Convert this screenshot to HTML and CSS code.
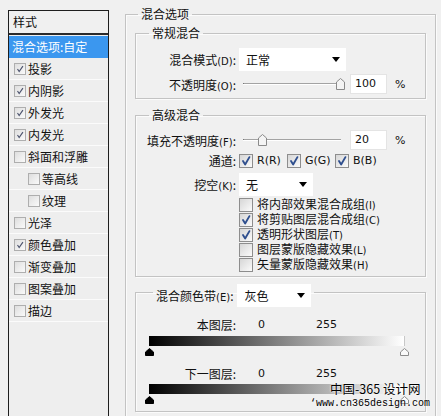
FILE: index.html
```html
<!DOCTYPE html>
<html lang="zh-CN">
<head>
<meta charset="utf-8">
<title>图层样式</title>
<link rel="stylesheet" href="styles.css">
</head>
<body>
<aside class="styles-list">
  <div class="list-head">样式</div>
  <div class="list-item selected">混合选项:自定</div>
  <div class="list-item"><span class="lcb"><svg viewBox="0 0 12 12"><path d="M3 6 L5 9 L9.5 2.5"/></svg></span>投影</div>
  <div class="list-item"><span class="lcb"><svg viewBox="0 0 12 12"><path d="M3 6 L5 9 L9.5 2.5"/></svg></span>内阴影</div>
  <div class="list-item"><span class="lcb"><svg viewBox="0 0 12 12"><path d="M3 6 L5 9 L9.5 2.5"/></svg></span>外发光</div>
  <div class="list-item"><span class="lcb"><svg viewBox="0 0 12 12"><path d="M3 6 L5 9 L9.5 2.5"/></svg></span>内发光</div>
  <div class="list-item"><span class="lcb"></span>斜面和浮雕</div>
  <div class="list-item sub"><span class="lcb"></span>等高线</div>
  <div class="list-item sub"><span class="lcb"></span>纹理</div>
  <div class="list-item"><span class="lcb"></span>光泽</div>
  <div class="list-item"><span class="lcb"><svg viewBox="0 0 12 12"><path d="M3 6 L5 9 L9.5 2.5"/></svg></span>颜色叠加</div>
  <div class="list-item"><span class="lcb"></span>渐变叠加</div>
  <div class="list-item"><span class="lcb"></span>图案叠加</div>
  <div class="list-item"><span class="lcb"></span>描边</div>
</aside>

<main class="panel">
  <fieldset class="group outer">
    <legend>混合选项</legend>

    <fieldset class="group sub-group">
      <legend>常规混合</legend>
      <div class="row row-select first">
        <span class="lbl">混合模式<small>(D)</small>:</span>
        <div class="select wide"><span>正常</span><i class="arrow"></i></div>
      </div>
      <div class="row row-slider">
        <span class="lbl">不透明度<small>(O)</small>:</span>
        <div class="ctl">
          <div class="slider">
            <div class="track"></div>
            <svg class="thumb" style="left:97px" viewBox="0 0 9 12"><path d="M0.5 4 L4.5 0.5 L8.5 4 V11.5 H0.5 Z"/></svg>
          </div>
          <div class="num">100</div>
          <span class="pct">%</span>
        </div>
      </div>
    </fieldset>

    <fieldset class="group sub-group adv">
      <legend>高级混合</legend>
      <div class="row row-slider first">
        <span class="lbl">填充不透明度<small>(F)</small>:</span>
        <div class="ctl">
          <div class="slider">
            <div class="track"></div>
            <svg class="thumb" style="left:19px" viewBox="0 0 9 12"><path d="M0.5 4 L4.5 0.5 L8.5 4 V11.5 H0.5 Z"/></svg>
          </div>
          <div class="num">20</div>
          <span class="pct">%</span>
        </div>
      </div>
      <div class="row row-chan">
        <span class="lbl">通道:</span>
        <div class="ctl">
          <span class="cbi"><span class="cb"><svg viewBox="0 0 14 14"><path d="M3.5 7 L6 11 L11 2.5"/></svg></span><span class="latin">R(R)</span></span>
          <span class="cbi"><span class="cb"><svg viewBox="0 0 14 14"><path d="M3.5 7 L6 11 L11 2.5"/></svg></span><span class="latin">G(G)</span></span>
          <span class="cbi"><span class="cb"><svg viewBox="0 0 14 14"><path d="M3.5 7 L6 11 L11 2.5"/></svg></span><span class="latin">B(B)</span></span>
        </div>
      </div>
      <div class="row row-knock">
        <span class="lbl">挖空<small>(K)</small>:</span>
        <div class="select narrow"><span>无</span><i class="arrow"></i></div>
      </div>
      <div class="checks">
        <div class="check-item"><span class="cb"></span><span class="ct">将内部效果混合成组<small>(I)</small></span></div>
        <div class="check-item"><span class="cb"><svg viewBox="0 0 14 14"><path d="M3.5 7 L6 11 L11 2.5"/></svg></span><span class="ct">将剪贴图层混合成组<small>(C)</small></span></div>
        <div class="check-item"><span class="cb"><svg viewBox="0 0 14 14"><path d="M3.5 7 L6 11 L11 2.5"/></svg></span><span class="ct">透明形状图层<small>(T)</small></span></div>
        <div class="check-item"><span class="cb"></span><span class="ct">图层蒙版隐藏效果<small>(L)</small></span></div>
        <div class="check-item"><span class="cb"></span><span class="ct">矢量蒙版隐藏效果<small>(H)</small></span></div>
      </div>
    </fieldset>

    <fieldset class="group sub-group band">
      <legend class="band-legend">
        <span class="band-lbl">混合颜色带<small>(E)</small>:</span>
        <span class="select narrow"><span>灰色</span><i class="arrow"></i></span>
      </legend>
      <div class="row row-band">
        <span class="lbl">本图层:</span>
        <div class="vals"><span class="v0">0</span><span>255</span></div>
      </div>
      <div class="bar"></div>
      <div class="marks">
        <svg class="mk" viewBox="0 0 9 8"><path class="blk" d="M0.5 7.5 V4 L4.5 0.5 L8.5 4 V7.5 Z"/></svg>
        <svg class="mk" viewBox="0 0 9 8"><path class="wht" d="M0.5 7.5 V4 L4.5 0.5 L8.5 4 V7.5 Z"/></svg>
      </div>
      <div class="row row-band second">
        <span class="lbl">下一图层:</span>
        <div class="vals"><span class="v0">0</span><span>255</span></div>
      </div>
      <div class="bar second-bar"></div>
      <div class="marks">
        <svg class="mk" viewBox="0 0 9 8"><path class="blk" d="M0.5 7.5 V4 L4.5 0.5 L8.5 4 V7.5 Z"/></svg>
        <svg class="mk" viewBox="0 0 9 8"><path class="wht" d="M0.5 7.5 V4 L4.5 0.5 L8.5 4 V7.5 Z"/></svg>
      </div>
    </fieldset>
  </fieldset>
</main>

<div class="watermark">
  <div class="wm-cn">中国-365 设计网</div>
  <div class="wm-url">‘www.cn365design.com</div>
</div>
</body>
</html>
```

FILE: styles.css
```css
html, body {
  margin: 0;
  padding: 0;
}

body {
  width: 441px;
  height: 416px;
  overflow: hidden;
  background: #f0f0f0;
  font-family: "Noto Sans CJK SC", "Liberation Sans", sans-serif;
  font-size: 12px;
  color: #111;
  display: flex;
  align-items: flex-start;
  position: relative;
}

/* ---------- left style list ---------- */
.styles-list {
  flex: none;
  width: 99px;
  height: 420px;
  margin: 10px 0 0 8px;
  border: 1px solid #1e1e1e;
  border-bottom: 0;
  background: #eeeeee;
}

.list-head {
  height: 22px;
  line-height: 22px;
  padding-left: 4px;
  border-bottom: 2px solid #2a2a2a;
  background: #f0f0f0;
}

.list-item {
  height: 21px;
  line-height: 21px;
  border-bottom: 1px solid #fbfbfb;
  display: flex;
  align-items: center;
  gap: 2px;
  padding-left: 5px;
  white-space: nowrap;
}

.list-item.selected {
  height: 22px;
  line-height: 22px;
  margin-top: 1px;
  border-bottom: 0;
  padding-left: 3px;
  background: #3b97ef;
  color: #fff;
}

.list-item.sub {
  padding-left: 19px;
}

.lcb {
  flex: none;
  width: 12px;
  height: 12px;
  box-sizing: border-box;
  border: 1px solid #aeaeae;
  background: linear-gradient(135deg, #dedede, #fafafa);
  display: flex;
}

.lcb svg {
  width: 10px;
  height: 10px;
}

.lcb path {
  fill: none;
  stroke: #4d546e;
  stroke-width: 1.4;
}

/* ---------- right panel ---------- */
.panel {
  flex: none;
  width: 311px;
  margin: 6px 0 0 16px;
}

fieldset.group {
  margin: 0;
  min-width: 0;
  border: 1px solid #c3c3c3;
  box-shadow: 1px 1px 0 #fbfbfb, inset 1px 1px 0 #fbfbfb;
}

fieldset.group > legend {
  padding: 0 3px;
  height: 16px;
  line-height: 16px;
}

.outer {
  padding: 3px 9px 0;
  height: 440px;
  box-sizing: border-box;
}

.outer > legend {
  margin-left: 3px;
}

.sub-group {
  padding: 0 0 4px;
}

.sub-group > legend {
  margin-left: 13px;
}

.adv {
  margin-top: 8px !important;
}

.band {
  margin-top: 7px !important;
  padding-bottom: 7px;
}

.row {
  display: grid;
  grid-template-columns: 100px auto;
  column-gap: 3px;
  align-items: center;
}

.lbl {
  text-align: right;
  white-space: nowrap;
}

.row-select {
  height: 23px;
}

.row-select.first {
  margin-top: 7px;
}

.row-slider {
  height: 20px;
  margin-top: 3px;
}

.row-slider.first {
  margin-top: 7px;
}

.ctl {
  display: flex;
  align-items: center;
}

.select {
  height: 23px;
  box-sizing: border-box;
  background: #fff;
  display: flex;
  align-items: center;
  justify-content: space-between;
  padding: 0 6px 0 7px;
}

.select.wide {
  width: 107px;
}

.select.narrow {
  width: 74px;
}

.arrow {
  width: 0;
  height: 0;
  border-left: 4px solid transparent;
  border-right: 4px solid transparent;
  border-top: 5px solid #000;
}

.slider {
  position: relative;
  width: 107px;
  height: 20px;
}

.track {
  margin: 9px 5px 0 4px;
  height: 1px;
  background: #a3a3a3;
  box-shadow: 0 1px 0 #fff;
  border-left: 1px solid #777;
}

.thumb {
  position: absolute;
  top: 4px;
  width: 9px;
  height: 12px;
}

.thumb path {
  fill: #f4f4f4;
  stroke: #8a8a8a;
  stroke-width: 1;
}

.num {
  width: 37px;
  height: 20px;
  margin-left: 4px;
  box-sizing: border-box;
  background: #fff;
  border: 1px solid #e4e4e4;
  padding-left: 4px;
  line-height: 18px;
  font-family: "DejaVu Sans", sans-serif;
  font-size: 11px;
}

.pct {
  margin-left: 8px;
  font-family: "DejaVu Sans", sans-serif;
  font-size: 11px;
}

.row-chan {
  height: 16px;
  margin-top: 2px;
}

.cbi {
  display: flex;
  align-items: center;
  gap: 4px;
  width: 48px;
  white-space: nowrap;
}

.latin {
  font-family: "DejaVu Sans", sans-serif;
  font-size: 11px;
}

.cb {
  flex: none;
  width: 14px;
  height: 14px;
  box-sizing: border-box;
  border: 1px solid #8d8d8d;
  background: linear-gradient(135deg, #d6d6d6, #fbfbfb);
  display: flex;
}

.cb svg {
  width: 12px;
  height: 12px;
}

.cb path {
  fill: none;
  stroke: #2f4f8e;
  stroke-width: 2.2;
  stroke-linecap: round;
  stroke-linejoin: round;
}

.row-knock {
  height: 23px;
  margin-top: 5px;
}

.checks {
  margin: 1px 0 0 103px;
}

.check-item {
  height: 15px;
  line-height: 15px;
  display: flex;
  align-items: center;
  gap: 4px;
  white-space: nowrap;
}

.ct {
  line-height: 15px;
}

small {
  font-family: "DejaVu Sans", sans-serif;
  font-size: 10px;
}

/* blend band */
.band-legend {
  display: flex;
  align-items: flex-start;
  gap: 4px;
  margin-left: 17px !important;
}

.band-lbl {
  line-height: 23px;
  white-space: nowrap;
}

.row-band {
  height: 16px;
  margin-top: 16px;
}

.row-band.second {
  margin-top: 9px;
}

.vals {
  display: flex;
  padding-left: 19px;
  font-family: "DejaVu Sans", sans-serif;
  font-size: 11px;
}

.v0 {
  width: 58px;
}

.bar {
  width: 255px;
  height: 10px;
  margin: 4px 0 0 13px;
  background: linear-gradient(to right, #000, #fff);
  border-right: 1px solid #c8c8c8;
}

.second-bar {
  margin-top: 3px;
}

.marks {
  width: 264px;
  height: 8px;
  margin: 2px 0 0 9px;
  display: flex;
  justify-content: space-between;
}

.mk {
  width: 9px;
  height: 8px;
}

.mk .blk {
  fill: #000;
  stroke: #000;
}

.mk .wht {
  fill: #fafafa;
  stroke: #8c8c8c;
}

/* watermark overlay */
.watermark {
  position: absolute;
  left: 310px;
  top: 380px;
  color: #000;
}

.wm-cn {
  margin-left: 20px;
  font-size: 12.5px;
  line-height: 17px;
  text-shadow: 0 0 2px #fff, 0 0 2px #fff;
}

.wm-url {
  font-family: "Liberation Mono", monospace;
  font-size: 10px;
  line-height: 14px;
  text-shadow: 0 0 2px #fff;
}
```
